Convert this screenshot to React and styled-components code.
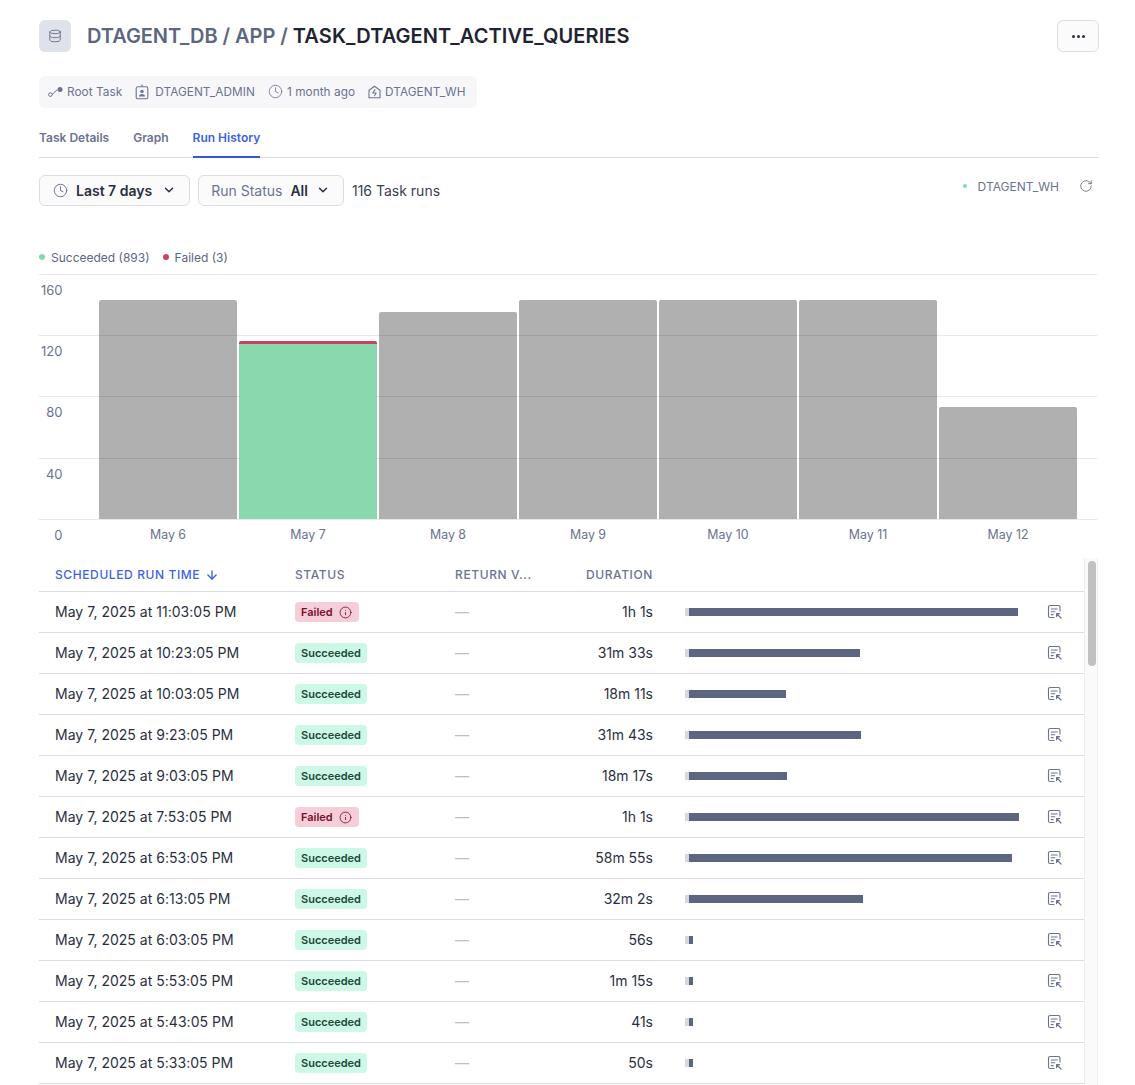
import React from "react";
import styled, { createGlobalStyle } from "styled-components";
import { ArrowDown, ChevronDown, Clock, Database, Info, RotateCw } from "lucide-react";

const runs = [
  { time: "May 7, 2025 at 11:03:05 PM", status: "Failed", duration: "1h 1s", end: 329 },
  { time: "May 7, 2025 at 10:23:05 PM", status: "Succeeded", duration: "31m 33s", end: 171 },
  { time: "May 7, 2025 at 10:03:05 PM", status: "Succeeded", duration: "18m 11s", end: 97 },
  { time: "May 7, 2025 at 9:23:05 PM", status: "Succeeded", duration: "31m 43s", end: 172 },
  { time: "May 7, 2025 at 9:03:05 PM", status: "Succeeded", duration: "18m 17s", end: 98 },
  { time: "May 7, 2025 at 7:53:05 PM", status: "Failed", duration: "1h 1s", end: 330 },
  { time: "May 7, 2025 at 6:53:05 PM", status: "Succeeded", duration: "58m 55s", end: 323 },
  { time: "May 7, 2025 at 6:13:05 PM", status: "Succeeded", duration: "32m 2s", end: 174 },
  { time: "May 7, 2025 at 6:03:05 PM", status: "Succeeded", duration: "56s", end: 4 },
  { time: "May 7, 2025 at 5:53:05 PM", status: "Succeeded", duration: "1m 15s", end: 4 },
  { time: "May 7, 2025 at 5:43:05 PM", status: "Succeeded", duration: "41s", end: 4 },
  { time: "May 7, 2025 at 5:33:05 PM", status: "Succeeded", duration: "50s", end: 4 },
];

const bars = [
  { label: "May 6", top: 26 },
  { label: "May 7", top: 67, failed: true },
  { label: "May 8", top: 38 },
  { label: "May 9", top: 26 },
  { label: "May 10", top: 26 },
  { label: "May 11", top: 26 },
  { label: "May 12", top: 133 },
];

const GlobalStyle = createGlobalStyle`
  html, body {
    margin: 0;
    height: 100%;
    overflow: hidden;
    background: #fff;
    font-family: Inter, "Liberation Sans", sans-serif;
    color: #2a2f3f;
  }
  * { box-sizing: border-box; }
`;

const Page = styled.div`
  height: 1085px;
  padding: 20px 36px 0 39px;
  display: flex;
  flex-direction: column;
  overflow: hidden;
`;

const Header = styled.header`
  display: flex;
  align-items: center;
  height: 32px;
`;

const DbIcon = styled.div`
  width: 32px;
  height: 32px;
  border-radius: 6px;
  background: #dfe2eb;
  color: #5d6680;
  display: flex;
  align-items: center;
  justify-content: center;
`;

const Title = styled.h1`
  margin: 0 0 0 16px;
  flex: 1;
  font-size: 20px;
  line-height: 32px;
  font-weight: 600;
  letter-spacing: -0.05px;
  color: #5d6680;
`;

const TitleStrong = styled.span`
  letter-spacing: 0.1px;
  color: #1f2433;
`;

const MoreButton = styled.button`
  width: 42px;
  height: 32px;
  padding: 0;
  border: 1px solid #dcdce8;
  border-radius: 6px;
  background: #fbfbfc;
  display: flex;
  align-items: center;
  justify-content: center;
  gap: 2px;
`;

const MoreDot = styled.span`
  width: 3px;
  height: 3px;
  border-radius: 50%;
  background: #2a2f3f;
`;

const MetaBar = styled.div`
  align-self: flex-start;
  margin-top: 24px;
  height: 32px;
  padding: 0 11px 1px 9px;
  display: flex;
  align-items: center;
  gap: 13px;
  border-radius: 6px;
  background: #f7f7f9;
  font-size: 11.8px;
  letter-spacing: 0.05px;
  color: #6b7390;
`;

const MetaItem = styled.span`
  display: flex;
  align-items: center;
  gap: ${(p) => p.$gap || 4}px;
  white-space: nowrap;
`;

const Tabs = styled.nav`
  margin-top: 14px;
  height: 36px;
  display: flex;
  gap: 24px;
  border-bottom: 1px solid #dcdce6;
`;

const Tab = styled.a`
  height: 36px;
  padding-top: 8px;
  font-size: 12px;
  line-height: 16px;
  font-weight: 600;
  color: ${(p) => (p.$active ? "#3d63dd" : "#6b7390")};
  border-bottom: ${(p) => (p.$active ? "2px solid #3458d4" : "none")};
`;

const Toolbar = styled.div`
  margin-top: 17px;
  height: 31px;
  display: flex;
  align-items: center;
`;

const Dropdown = styled.button`
  height: 31px;
  padding: 0 13px 1px ${(p) => p.$left}px;
  margin-right: 8px;
  display: flex;
  align-items: center;
  border: 1px solid #dcdce8;
  border-radius: 6px;
  background: #fbfbfc;
  font: inherit;
  font-size: 14px;
  color: #2a2f3f;
`;

const DropdownLabel = styled.span`
  font-weight: 600;
  margin: 0 ${(p) => p.$after}px 0 8px;
`;

const Muted = styled.span`
  color: #6b7390;
`;

const RunCount = styled.span`
  font-size: 14px;
  color: #3a3f50;
`;

const Warehouse = styled.div`
  margin-left: auto;
  margin-right: 6px;
  padding-bottom: 9px;
  display: flex;
  align-items: center;
  font-size: 12px;
  color: #6b7390;
`;

const StatusDot = styled.span`
  width: ${(p) => p.$size}px;
  height: ${(p) => p.$size}px;
  border-radius: 50%;
  background: ${(p) => p.$color};
`;

const WarehouseName = styled.span`
  margin: 0 20px 0 11px;
`;

const Legend = styled.div`
  margin-top: 43px;
  height: 16px;
  display: flex;
  align-items: center;
  gap: 13px;
  font-size: 12px;
  color: #5d6680;
`;

const LegendItem = styled.span`
  display: flex;
  align-items: center;
  gap: 6px;
`;

const Chart = styled.svg`
  display: block;
  margin-top: 9px;
  flex: none;
`;

const AxisText = styled.text`
  fill: #6b7390;
  font-size: ${(p) => p.$size}px;
  font-family: Inter, "Liberation Sans", sans-serif;
`;

const TableArea = styled.div`
  margin-top: 10px;
  flex: 1;
  min-height: 0;
  display: flex;
`;

const Table = styled.div`
  width: 1045px;
`;

const Row = styled.div`
  display: grid;
  grid-template-columns: 240px 160px 131px 99px 1fr 40px;
  align-items: center;
  height: 41px;
  border-bottom: 1px solid #dcdce6;
`;

const HeadRow = styled(Row)`
  height: 34px;
`;

const HeadCell = styled.div`
  padding-left: 16px;
  display: flex;
  align-items: center;
  gap: 5px;
  font-size: 12px;
  font-weight: 500;
  letter-spacing: 0.6px;
  white-space: nowrap;
  color: ${(p) => (p.$active ? "#3d63dd" : "#6b7390")};
`;

const TimeCell = styled.div`
  padding: 0 0 2px 16px;
  font-size: 14px;
  letter-spacing: 0.02px;
  color: #2a2f3f;
`;

const StatusCell = styled.div`
  padding-left: 16px;
  display: flex;
`;

const Badge = styled.span`
  display: inline-flex;
  align-items: center;
  gap: 6px;
  height: 20px;
  padding: 0 6px;
  border-radius: 4px;
  font-size: 11px;
  font-weight: 600;
  background: ${(p) => (p.$failed ? "#f5ced9" : "#cdf7e6")};
  color: ${(p) => (p.$failed ? "#7a0f2e" : "#1c4a3a")};
`;

const BadgeInfo = styled(Info)`
  margin-right: 1px;
`;

const EmptyCell = styled.div`
  padding: 0 0 2px 16px;
  font-size: 14px;
  color: #b9bdcc;
`;

const DurationCell = styled.div`
  padding: 0 16px 2px;
  text-align: right;
  font-size: 14px;
  color: #2a2f3f;
`;

const BarCell = styled.div`
  padding-left: 16px;
  display: flex;
  align-items: center;
`;

const BarLead = styled.span`
  width: 4px;
  height: 8px;
  background: #d5d8e3;
`;

const BarFill = styled.span`
  height: 8px;
  background: #5d6680;
`;

const ActionCell = styled.div`
  display: flex;
  justify-content: flex-start;
  padding-left: 3px;
  color: #6b7390;
`;

const ScrollTrack = styled.div`
  width: 14px;
  padding: 3px 2px 0 3px;
  background: #fafafa;
  border-left: 1px solid #efefef;
  border-right: 1px solid #efefef;
`;

const ScrollThumb = styled.div`
  width: 8px;
  height: 105px;
  border-radius: 4px;
  background: #c1c1c1;
`;

const RootTaskIcon = () => (
  <svg width="15" height="16" viewBox="0 0 15 16" fill="none" stroke="currentColor" strokeWidth="1">
    <circle cx="2.4" cy="10.6" r="1.8" />
    <path d="M4.2 10.2c2.4-.2 2.2-3.6 5-4.2" />
    <circle cx="12" cy="5.6" r="2.5" fill="currentColor" stroke="none" />
  </svg>
);

const OwnerIcon = () => (
  <svg width="14" height="16" viewBox="0 0 14 16" fill="none" stroke="currentColor" strokeWidth="1.1">
    <rect x="1.2" y="2.8" width="11.6" height="12" rx="1.6" />
    <path d="M7 .6v2.2" />
    <circle cx="7" cy="7.4" r="1.7" fill="currentColor" stroke="none" />
    <path d="M3.9 12.6c0-3.4 6.2-3.4 6.2 0z" fill="currentColor" stroke="none" />
  </svg>
);

const WarehouseIcon = () => (
  <svg width="13" height="16" viewBox="0 0 13 16" fill="none" stroke="currentColor" strokeWidth="1.1" strokeLinejoin="round">
    <path d="M1 6.2 6.5 2.2 12 6.2v7.6H1z" />
    <path d="M7.2 5.4 4.8 9h3.4l-2 3" />
  </svg>
);

const RunGraphIcon = () => (
  <svg width="16" height="16" viewBox="0 0 16 16" fill="none" stroke="currentColor" strokeWidth="1.1" strokeLinecap="round">
    <path d="M7 13.5H3.1A1.6 1.6 0 0 1 1.5 11.9V3.1A1.6 1.6 0 0 1 3.1 1.5h8.3A1.6 1.6 0 0 1 13 3.1V7" />
    <path d="M4.2 5h6M4.2 7.8h3.6M4.2 10.6h2" />
    <path d="M9.6 9.6 14 14M9.6 9.6v3M9.6 9.6h3" strokeWidth="1.2" />
  </svg>
);

const TaskChart = () => (
  <Chart width="1060" height="274" viewBox="0 0 1060 274">
    {[0, 61, 122, 184, 245].map((y) => (
      <line key={y} x1="0" x2="1058" y1={y + 0.5} y2={y + 0.5} stroke="#e8e8ec" />
    ))}
    {["160", "120", "80", "40", "0"].map((value, i) => (
      <AxisText key={value} $size={13} x="23.5" y={[21, 82, 143, 205, 266][i]} textAnchor="end">
        {value}
      </AxisText>
    ))}
    {bars.map((bar, i) => {
      const x = 60 + i * 140;
      const d = `M${x} 245V${bar.top + 2}q0-2 2-2H${x + 136}q2 0 2 2V245z`;
      return (
        <g key={bar.label}>
          {bar.failed ? (
            <>
              <path d={d} fill="#c9425f" />
              <rect x={x} y={bar.top + 3} width="138" height={242 - bar.top} fill="#8ad8ae" />
            </>
          ) : (
            <path d={d} fill="#000" fillOpacity="0.31" />
          )}
          <AxisText $size={12.4} x={x + 69} y="265" textAnchor="middle">
            {bar.label}
          </AxisText>
        </g>
      );
    })}
  </Chart>
);

const App = () => (
  <>
    <GlobalStyle />
    <Page>
      <Header>
        <DbIcon>
          <Database size={14} strokeWidth={1.4} />
        </DbIcon>
        <Title>
          DTAGENT_DB / APP / <TitleStrong>TASK_DTAGENT_ACTIVE_QUERIES</TitleStrong>
        </Title>
        <MoreButton aria-label="More">
          <MoreDot />
          <MoreDot />
          <MoreDot />
        </MoreButton>
      </Header>

      <MetaBar>
        <MetaItem>
          <RootTaskIcon />
          Root Task
        </MetaItem>
        <MetaItem $gap={6}>
          <OwnerIcon />
          DTAGENT_ADMIN
        </MetaItem>
        <MetaItem>
          <Clock size={15} strokeWidth={1.3} />
          1 month ago
        </MetaItem>
        <MetaItem>
          <WarehouseIcon />
          DTAGENT_WH
        </MetaItem>
      </MetaBar>

      <Tabs>
        <Tab>Task Details</Tab>
        <Tab>Graph</Tab>
        <Tab $active>Run History</Tab>
      </Tabs>

      <Toolbar>
        <Dropdown $left={13}>
          <Clock size={15} strokeWidth={1.4} color="#5d6680" />
          <DropdownLabel $after={10}>Last 7 days</DropdownLabel>
          <ChevronDown size={14} strokeWidth={2.5} />
        </Dropdown>
        <Dropdown $left={12}>
          <Muted>Run Status</Muted>
          <DropdownLabel $after={8}>All</DropdownLabel>
          <ChevronDown size={14} strokeWidth={2.5} />
        </Dropdown>
        <RunCount>116 Task runs</RunCount>
        <Warehouse>
          <StatusDot $size={4} $color="#8ad8ae" />
          <WarehouseName>DTAGENT_WH</WarehouseName>
          <RotateCw size={14} strokeWidth={1.4} color="#5d6680" />
        </Warehouse>
      </Toolbar>

      <Legend>
        <LegendItem>
          <StatusDot $size={6} $color="#8ad8ae" />
          Succeeded (893)
        </LegendItem>
        <LegendItem>
          <StatusDot $size={6} $color="#c9425f" />
          Failed (3)
        </LegendItem>
      </Legend>

      <TaskChart />

      <TableArea>
        <Table>
          <HeadRow>
            <HeadCell $active>
              SCHEDULED RUN TIME
              <ArrowDown size={14} strokeWidth={2.4} />
            </HeadCell>
            <HeadCell>STATUS</HeadCell>
            <HeadCell>RETURN V...</HeadCell>
            <HeadCell>DURATION</HeadCell>
          </HeadRow>
          {runs.map((run) => (
            <Row key={run.time}>
              <TimeCell>{run.time}</TimeCell>
              <StatusCell>
                <Badge $failed={run.status === "Failed"}>
                  {run.status}
                  {run.status === "Failed" && <BadgeInfo size={13} strokeWidth={1.6} />}
                </Badge>
              </StatusCell>
              <EmptyCell>—</EmptyCell>
              <DurationCell>{run.duration}</DurationCell>
              <BarCell>
                <BarLead />
                <BarFill style={{ width: run.end }} />
              </BarCell>
              <ActionCell>
                <RunGraphIcon />
              </ActionCell>
            </Row>
          ))}
        </Table>
        <ScrollTrack>
          <ScrollThumb />
        </ScrollTrack>
      </TableArea>
    </Page>
  </>
);

export default App;
